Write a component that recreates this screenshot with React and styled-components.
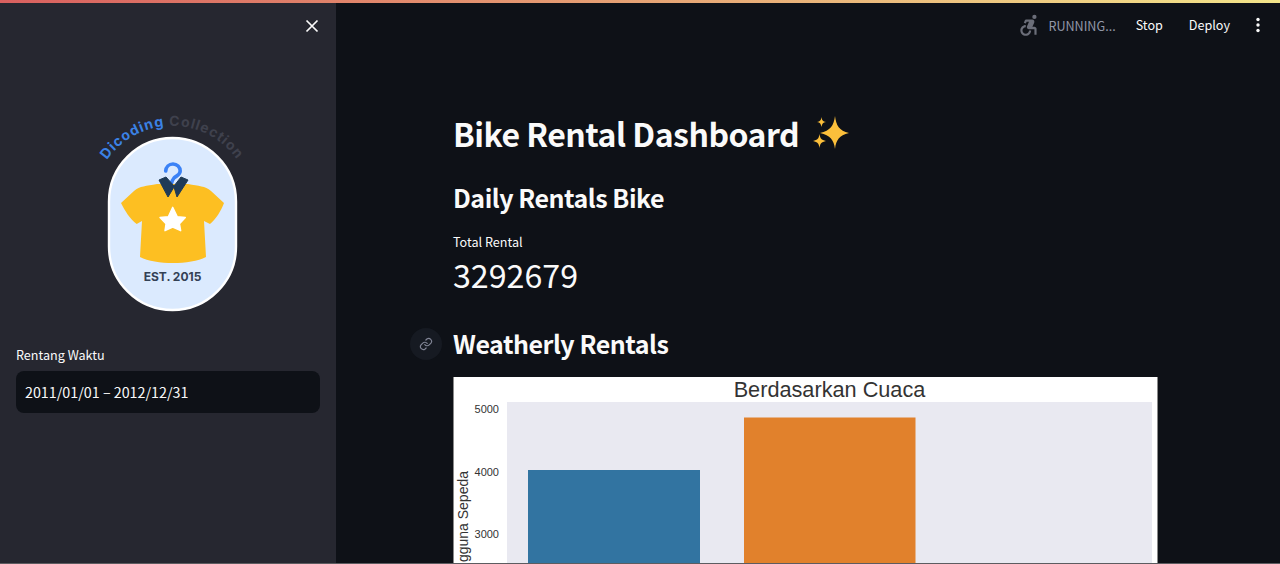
import React from 'react';
import styled, { createGlobalStyle } from 'styled-components';
import { MdAccessibleForward } from 'react-icons/md';

const GlobalStyle = createGlobalStyle`
  html, body {
    margin: 0;
    padding: 0;
    height: 100%;
    background: #0e1117;
  }
  body {
    font-family: "Noto Sans CJK SC", "Noto Sans", sans-serif;
    color: #fafafa;
    overflow: hidden;
  }
  * { box-sizing: border-box; }
`;

const Shell = styled.div`
  display: flex;
  flex-flow: column nowrap;
  width: 1280px;
  height: 564px;
  overflow: hidden;
  border-bottom: 1px solid #5c5c60;
`;

const Decoration = styled.div`
  flex: none;
  height: 3px;
  background: linear-gradient(90deg, #d9605f, #f3e58a);
`;

const Body = styled.div`
  display: flex;
  flex: 1;
  min-height: 0;
`;

const Sidebar = styled.aside`
  flex: none;
  width: 336px;
  background: #262730;
  display: flex;
  flex-direction: column;
  padding: 0 16px;
`;

const SidebarTop = styled.div`
  display: flex;
  justify-content: flex-end;
  height: 45px;
  padding: 16px 1px 0 0;
  color: #fafafa;
  svg { display: block; }
`;

const LogoWrap = styled.div`
  width: 304px;
  margin-top: 60px;
  svg { display: block; }
`;

const FieldLabel = styled.div`
  margin-top: 33px;
  font-size: 12.6px;
  line-height: 20px;
  color: #fafafa;
`;

const DateInput = styled.div`
  margin-top: 6px;
  height: 42px;
  border-radius: 8px;
  background: #0e1117;
  padding: 0 9px;
  font-size: 14.3px;
  line-height: 42px;
  color: #fafafa;
`;

const Main = styled.main`
  flex: 1;
  min-width: 0;
  display: flex;
  flex-direction: column;
`;

const Toolbar = styled.header`
  flex: none;
  display: flex;
  align-items: center;
  justify-content: flex-end;
  height: 44px;
  padding-right: 20px;
`;

const Status = styled.div`
  display: flex;
  align-items: center;
  gap: 6px;
  margin-right: 20px;
  font-size: 12.6px;
  color: #9297a8;
  svg { display: block; color: #6b6e79; }
`;

const ToolButton = styled.div`
  font-size: 12.6px;
  line-height: 20px;
  color: #fafafa;
  margin-right: ${({ $gap }) => $gap}px;
`;

const Content = styled.div`
  width: 704px;
  margin-left: 117px;
  padding-top: 61px;
`;

const Title = styled.h1`
  margin: 0;
  display: flex;
  align-items: center;
  font-size: 32px;
  line-height: 50px;
  font-weight: 700;
  letter-spacing: -0.5px;
`;

const Sparkle = styled.span`
  display: inline-flex;
  margin-left: 13px;
  svg { display: block; }
`;

const SectionTitle = styled.h2`
  position: relative;
  margin: ${({ $top }) => $top}px 0 0;
  font-size: 25px;
  line-height: 40px;
  font-weight: 700;
  letter-spacing: -0.48px;
`;

const AnchorLink = styled.span`
  position: absolute;
  left: -43px;
  top: 5px;
  width: 32px;
  height: 32px;
  border-radius: 50%;
  background: #161a22;
  display: flex;
  align-items: center;
  justify-content: center;
  color: #808495;
`;

const MetricLabel = styled.div`
  margin-top: 15px;
  font-size: 12.6px;
  line-height: 20px;
`;

const MetricValue = styled.div`
  margin-top: -2px;
  font-size: 32.2px;
  line-height: 48px;
  font-weight: 400;
`;

const Chart = styled.div`
  margin-top: 14px;
  width: 704.5px;
  height: 187px;
  background: #fff;
  border-left: 1px solid #8a8a8a;
  border-right: 1px solid #8a8a8a;
  svg { display: block; }
`;

function Logo () {
  return (
    <svg width="304" height="204" viewBox="0 0 304 204">
      <defs>
        <path id="logo-arc" d="M91 52 A79 79 0 0 1 235 97" fill="none" />
      </defs>
      <text fontFamily="Inter, sans-serif" fontSize="14" fontWeight="700" letterSpacing="1">
        <textPath href="#logo-arc" startOffset="0">
          <tspan fill="#3b82e6">Dicoding </tspan>
          <tspan fill="#3f414d">Collection</tspan>
        </textPath>
      </text>
      <rect x="93" y="30" width="127" height="172" rx="63.5" fill="#dbeafe" stroke="#fff" strokeWidth="2.4" />
      <path d="M149.7 63 C150 59 153 56 157 56 C161 56 164.2 59 164.2 63 C164.2 67 160 68 158 70 C156.8 71.5 156 73 155.5 75" fill="none" stroke="#3b82f6" strokeWidth="3.6" strokeLinecap="round" />
      <path d="M141 76 C130 78 124 78 118 83 L105 95 C109 103 114 111 120.7 116 L126 113 L124 149 C140 157 174 157 190 149 L188 113 L194 116 C200 111 205 103 208 95 L195 83 C189 78 183 78 172 76 L157 76 Z" fill="#fdbf22" />
      <path d="M143 72 L150 69 L158 78 L165 69 L172 72 L161 89 L158 79 L152 89 Z" fill="#1f3b57" stroke="#1f3b57" strokeLinejoin="round" strokeWidth="1" />
      <path d="M156.7 99.3 L161.3 108.7 L169.3 109.5 L163.5 115.8 L164.7 122.7 L156.7 119 L149 122.7 L150 115.8 L144 109.5 L152.3 108.7 Z" fill="#fff" stroke="#fff" strokeLinejoin="round" strokeWidth="1.4" />
      <text x="156.5" y="172.5" textAnchor="middle" fontFamily="Inter, sans-serif" fontSize="12" fontWeight="700" fill="#334155">EST. 2015</text>
    </svg>
  );
}

function SparkleIcon () {
  return (
    <svg width="38" height="34" viewBox="0 0 38 34">
      <path d="M23 0 C24.2 9.5 27 14.5 37 17 C27 19.5 24.2 24 23 33 C21.8 24 18.5 19.5 8 17 C18.5 14.5 21.8 9.5 23 0 Z" fill="#fbbf3b" />
      <path d="M9.5 1 C10.1 4.4 10.8 5.4 14 6 C10.8 6.6 10.1 7.8 9.5 11 C8.9 7.8 8.2 6.6 5 6 C8.2 5.4 8.9 4.4 9.5 1 Z" fill="#fbbf3b" />
      <path d="M7.5 18 C8.2 22.5 9.2 23.8 14 25 C9.2 26.2 8.2 27.5 7.5 32 C6.8 27.5 5.8 26.2 1 25 C5.8 23.8 6.8 22.5 7.5 18 Z" fill="#fbbf3b" />
    </svg>
  );
}

function BarChart () {
  const ticks = [
    { label: '5000', y: 36 },
    { label: '4000', y: 99 },
    { label: '3000', y: 161 }
  ];
  return (
    <svg width="703" height="187" viewBox="0 0 703 187">
      <rect x="53" y="25" width="645" height="162" fill="#e9e9f1" />
      <rect x="74" y="93" width="172" height="94" fill="#3274a1" />
      <rect x="290" y="40.5" width="171.5" height="146.5" fill="#e1812c" />
      <text x="375.5" y="20" textAnchor="middle" fontFamily="Liberation Sans, sans-serif" fontSize="21.7" fill="#333">Berdasarkan Cuaca</text>
      {ticks.map((t) => (
        <text key={t.label} x="45" y={t.y} textAnchor="end" fontFamily="Liberation Sans, sans-serif" fontSize="11" fill="#333">{t.label}</text>
      ))}
      <text transform="translate(14 94) rotate(-90)" textAnchor="end" fontFamily="Liberation Sans, sans-serif" fontSize="14" fill="#333">Pengguna Sepeda</text>
    </svg>
  );
}

export default function App () {
  return (
    <Shell>
      <GlobalStyle />
      <Decoration />
      <Body>
        <Sidebar>
          <SidebarTop>
            <svg width="14" height="14" viewBox="0 0 14 14" fill="none" stroke="currentColor" strokeWidth="1.7">
              <path d="M1.5 1.5 L12.5 12.5 M12.5 1.5 L1.5 12.5" />
            </svg>
          </SidebarTop>
          <LogoWrap><Logo /></LogoWrap>
          <FieldLabel>Rentang Waktu</FieldLabel>
          <DateInput>2011/01/01 – 2012/12/31</DateInput>
        </Sidebar>
        <Main>
          <Toolbar>
            <Status><MdAccessibleForward size={26} />RUNNING...</Status>
            <ToolButton $gap={26}>Stop</ToolButton>
            <ToolButton $gap={26}>Deploy</ToolButton>
            <svg width="4" height="16" viewBox="0 0 4 16" fill="#fafafa">
              <circle cx="2" cy="2.5" r="1.7" />
              <circle cx="2" cy="8" r="1.7" />
              <circle cx="2" cy="13.5" r="1.7" />
            </svg>
          </Toolbar>
          <Content>
            <Title>
              Bike Rental Dashboard
              <Sparkle><SparkleIcon /></Sparkle>
            </Title>
            <SectionTitle $top={19}>Daily Rentals Bike</SectionTitle>
            <MetricLabel>Total Rental</MetricLabel>
            <MetricValue>3292679</MetricValue>
            <SectionTitle $top={25}>
              <AnchorLink>
                <svg width="14" height="14" viewBox="0 0 24 24" fill="none" stroke="currentColor" strokeWidth="2" strokeLinecap="round">
                  <path d="M10 13a5 5 0 0 0 7.5.5l3-3a5 5 0 0 0-7-7l-1.7 1.7" />
                  <path d="M14 11a5 5 0 0 0-7.5-.5l-3 3a5 5 0 0 0 7 7l1.7-1.7" />
                </svg>
              </AnchorLink>
              Weatherly Rentals
            </SectionTitle>
            <Chart><BarChart /></Chart>
          </Content>
        </Main>
      </Body>
    </Shell>
  );
}
